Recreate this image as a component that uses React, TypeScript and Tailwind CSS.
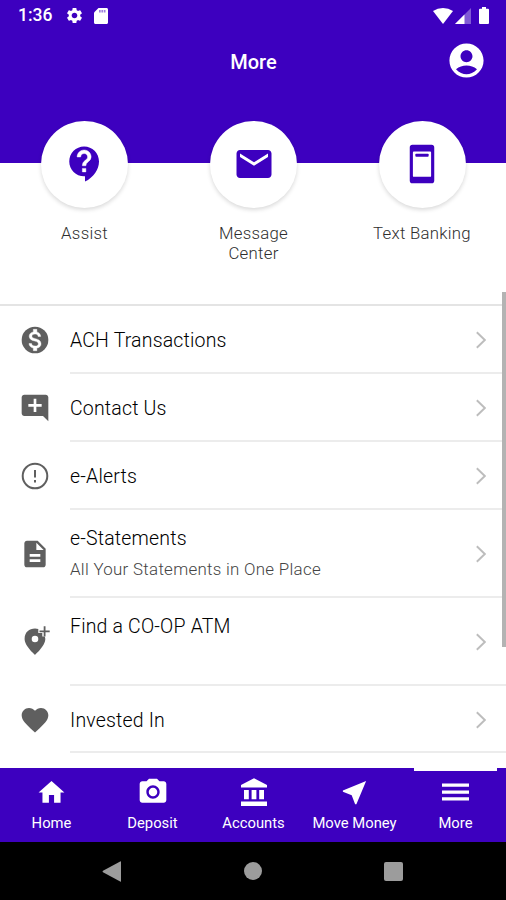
import type { ReactNode } from "react";
import {
  MdAccountCircle,
  MdAddComment,
  MdCameraAlt,
  MdDescription,
  MdEmail,
  MdFavorite,
  MdHome,
  MdNearMe,
  MdSettings,
} from "react-icons/md";

function AssistIcon() {
  return (
    <svg className="mb-0.5 size-[42px]" viewBox="0 0 24 24" fill="currentColor">
      <path d="M11.500 2C6.810 2 3 5.810 3 10.500S6.810 19 11.500 19h.5v3c4.860-2.340 8-7 8-11.500C20 5.810 16.190 2 11.500 2z" />
      <path
        fill="white"
        stroke="white"
        strokeWidth=".25"
        d="M12.500 16.500h-2v-2h2v2zm0-3.500h-2c0-3.250 3-3 3-5 0-1.100-.9-2-2-2s-2 .9-2 2h-2c0-2.210 1.790-4 4-4s4 1.790 4 4c0 2.500-3 2.750-3 5z"
      />
    </svg>
  );
}

function PhoneIcon() {
  return (
    <svg className="mb-0.5 size-[42px]" viewBox="0 0 24 24" fill="currentColor">
      <path
        fillRule="evenodd"
        d="M6.500 1h11c.9 0 1.500.6 1.500 1.500v19c0 .9-.6 1.500-1.500 1.500h-11C5.600 23 5 22.400 5 21.500v-19C5 1.600 5.600 1 6.500 1zM7.300 4.900c-.3 0-.5.2-.5.5v13.400c0 .3.2.5.5.5h9.400c.3 0 .5-.2.5-.5V5.400c0-.3-.2-.5-.5-.5z"
      />
      <rect x="8.200" y="6.100" width="7.600" height="1.700" rx=".5" />
    </svg>
  );
}

function DollarIcon() {
  return (
    <svg className="size-8" viewBox="0 0 24 24" fill="currentColor">
      <circle cx="12" cy="12" r="10" />
      <path
        fill="white"
        stroke="white"
        strokeWidth=".3"
        d="M13.410 18.090V20h-2.670v-1.930c-1.710-.36-3.160-1.460-3.270-3.400h1.960c.1 1.050.82 1.870 2.650 1.870 1.960 0 2.400-.98 2.400-1.590 0-.83-.44-1.610-2.670-2.140-2.480-.6-4.180-1.620-4.180-3.670 0-1.720 1.390-2.840 3.110-3.210V4h2.670v1.950c1.860.45 2.790 1.860 2.850 3.390H14.300c-.05-1.110-.64-1.870-2.220-1.870-1.500 0-2.400.68-2.400 1.640 0 .84.65 1.390 2.670 1.910s4.180 1.390 4.180 3.910c-.02 1.830-1.380 2.830-3.120 3.160z"
      />
    </svg>
  );
}

function AlertIcon() {
  return (
    <svg className="size-8" viewBox="0 0 32 32" fill="none" stroke="currentColor">
      <circle cx="16" cy="16" r="12.300" strokeWidth="2" />
      <path d="M16 10v7.600M16 20v2.400" strokeWidth="2" />
    </svg>
  );
}

function AddPinIcon() {
  return (
    <svg className="mb-1 size-8" viewBox="0 0 32 32" fill="currentColor">
      <path
        fillRule="evenodd"
        d="M16 4.500c1.200 0 2.300.2 3.300.6V9h4v3.600h2.400c.4 1 .6 1.600.6 2.400 0 7-10.300 15.800-10.300 15.800S5.600 22 5.600 15 10.300 4.500 16 4.500zM16 11.700a3.300 3.300 0 1 0 0 6.600 3.300 3.300 0 1 0 0-6.600z"
      />
      <path d="M24.700 2.200h1.800v4.200h4.200v1.800h-4.200v4.200h-1.800V8.200h-4.200V6.400h4.200z" />
    </svg>
  );
}

function BankIcon() {
  return (
    <svg className="h-7 w-[26px]" viewBox="0 0 26 28" fill="currentColor">
      <path d="M13 .3 26 7v2.500H0V7zM3 12h4.800v9.200H3zm7.600 0h4.800v9.200h-4.800zm7.600 0H23v9.200h-4.800zM0 23.500h26V28H0z" />
    </svg>
  );
}

function MenuIcon() {
  return (
    <svg className="h-[18px] w-[27px]" viewBox="0 0 27 18" fill="currentColor">
      <path d="M0 .5h27v3.200H0zm0 7h27v3.200H0zm0 6.800h27v3.200H0z" />
    </svg>
  );
}

function StatusBar() {
  return (
    <div className="flex h-[31px] items-center pl-[18px] pr-[17px]">
      <span className="w-[38px] text-[17.500px] leading-[31px] font-medium">1:36</span>
      <MdSettings className="ml-[9px] size-[19px]" />
      <svg className="ml-[10px] h-4 w-[14px]" viewBox="0 0 14 16" fill="currentColor">
        <path d="M4.500 0H12.500C13.400 0 14 .6 14 1.500v13c0 .9-.6 1.500-1.500 1.500h-11C.6 16 0 15.400 0 14.500V4.500z" />
        <path d="M5 2h1.700v2.500H5zm2.400 0h1.700v2.500H7.400zm2.400 0h1.700v2.500H9.800z" fill="#3d00bf" opacity=".5" />
      </svg>
      <div className="ml-auto flex items-center">
        <svg className="h-4 w-5" viewBox="0 0 20 16" fill="currentColor">
          <path d="M10 16 0 3Q4.500 0 10 0t10 3z" />
        </svg>
        <svg className="ml-[2px] h-4 w-4" viewBox="0 0 16 16" fill="currentColor">
          <path opacity=".35" d="M16 0v16H0z" />
          <path d="M9.500 6.500V16H0z" />
        </svg>
        <svg className="ml-[8px] h-[17px] w-[10px]" viewBox="0 0 10 17" fill="currentColor">
          <path d="M3 0h4v1.700h2Q10 1.700 10 2.700V16q0 1-1 1H1q-1 0-1-1V2.700q0-1 1-1h2z" />
        </svg>
      </div>
    </div>
  );
}

function Shortcut({ icon, label }: { icon: ReactNode; label: string }) {
  return (
    <div className="flex flex-col items-center">
      <div className="flex size-[87px] items-center justify-center rounded-full bg-white text-[#3d00bf] shadow-[0_2px_4px_rgba(0,0,0,0.15)]">
        {icon}
      </div>
      <span className="mt-[15px] w-[110px] text-center text-[16.800px] leading-5 font-light tracking-[0.270px] text-[#2e2e2e]">
        {label}
      </span>
    </div>
  );
}

function Chevron() {
  return (
    <svg className="mt-[2px] mr-5 h-[18px] w-[10px] shrink-0" viewBox="0 0 10 18" fill="none" stroke="#bdbdbd" strokeWidth="1.900">
      <path d="M.8 1.200 8.800 9l-8 7.800" />
    </svg>
  );
}

type Item = { icon: ReactNode; title: string; detail?: string; height: string };

const items: Item[] = [
  { icon: <DollarIcon />, title: "ACH Transactions", height: "h-[68px]" },
  { icon: <MdAddComment className="size-8" />, title: "Contact Us", height: "h-[68px]" },
  { icon: <AlertIcon />, title: "e-Alerts", height: "h-[68px]" },
  { icon: <MdDescription className="size-8" />, title: "e-Statements", detail: "All Your Statements in One Place", height: "h-[88px]" },
  { icon: <AddPinIcon />, title: "Find a CO-OP ATM", detail: "", height: "h-[88px]" },
  { icon: <MdFavorite className="size-8" />, title: "Invested In", height: "h-[67px]" },
];

function ListRow({ icon, title, detail, height }: Item) {
  return (
    <div className={`flex pl-[19px] ${height}`}>
      <div className="flex w-[51px] items-center text-[#5f5f5f]">{icon}</div>
      <div className="flex flex-1 items-center border-b-2 border-[#ececec]">
        <div className={detail === undefined ? "flex-1 pt-1" : "flex-1 pt-0.5"}>
          <div className="text-[19.500px] leading-7 font-light tracking-[0.180px] text-black">{title}</div>
          {detail !== undefined && (
            <div className="mt-[2px] h-[29px] text-[16.900px] leading-7 font-light tracking-[0.290px] text-[#444]">{detail}</div>
          )}
        </div>
        <Chevron />
      </div>
    </div>
  );
}

const tabs = [
  { icon: <MdHome className="size-[31px]" />, label: "Home" },
  { icon: <MdCameraAlt className="size-8" />, label: "Deposit" },
  { icon: <BankIcon />, label: "Accounts" },
  { icon: <MdNearMe className="size-[31px]" />, label: "Move Money" },
  { icon: <MenuIcon />, label: "More" },
];

export default function App() {
  return (
    <div className="relative flex h-[900px] w-[506px] flex-col overflow-hidden bg-white font-['Roboto',sans-serif]">
      <header className="h-[163px] shrink-0 bg-[#3d00bf] text-white">
        <StatusBar />
        <div className="grid h-[60px] grid-cols-3 items-center">
          <h1 className="col-start-2 pt-px pl-px text-center text-[20px] font-medium">More</h1>
          <MdAccountCircle className="mr-[19px] mb-px size-[41px] justify-self-end" />
        </div>
      </header>

      <section className="z-10 -mt-[42px] grid h-[185px] shrink-0 grid-cols-[169px_169px_168px] border-b-2 border-[#e4e4e4]">
        <Shortcut icon={<AssistIcon />} label="Assist" />
        <Shortcut icon={<MdEmail className="mb-0.5 size-[42px]" />} label="Message Center" />
        <Shortcut icon={<PhoneIcon />} label="Text Banking" />
      </section>

      <main className="min-h-0 flex-1 overflow-hidden">
        {items.map((item) => (
          <ListRow key={item.title} {...item} />
        ))}
      </main>
      <div className="absolute top-[292px] right-0 z-20 h-[355px] w-1 bg-[#b3b3b3]" />

      <nav className="grid h-[74px] shrink-0 grid-cols-5 bg-[#3d00bf] pl-px text-white">
        {tabs.map((tab) => (
          <div key={tab.label} className="relative flex flex-col items-center">
            {tab.label === "More" && <div className="absolute top-0 h-[3px] w-[83px] bg-white" />}
            <div className="mt-1.5 flex h-9 items-center">{tab.icon}</div>
            <span className="mt-[3px] text-[14.800px] leading-5 font-normal whitespace-nowrap">{tab.label}</span>
          </div>
        ))}
      </nav>

      <footer className="flex h-[58px] shrink-0 items-center justify-between bg-black pr-[103px] pl-[102px] text-[#9c9c9c]">
        <svg className="h-[21px] w-5" viewBox="0 0 20 21" fill="currentColor">
          <path d="M19 .8v19.400q0 .8-.8.4L1 11.200q-1-.7 0-1.400L18.200.4q.8-.4.8.4z" />
        </svg>
        <div className="size-[18px] rounded-full bg-[#9c9c9c]" />
        <div className="size-[19px] rounded-[2px] bg-[#9c9c9c]" />
      </footer>
    </div>
  );
}
